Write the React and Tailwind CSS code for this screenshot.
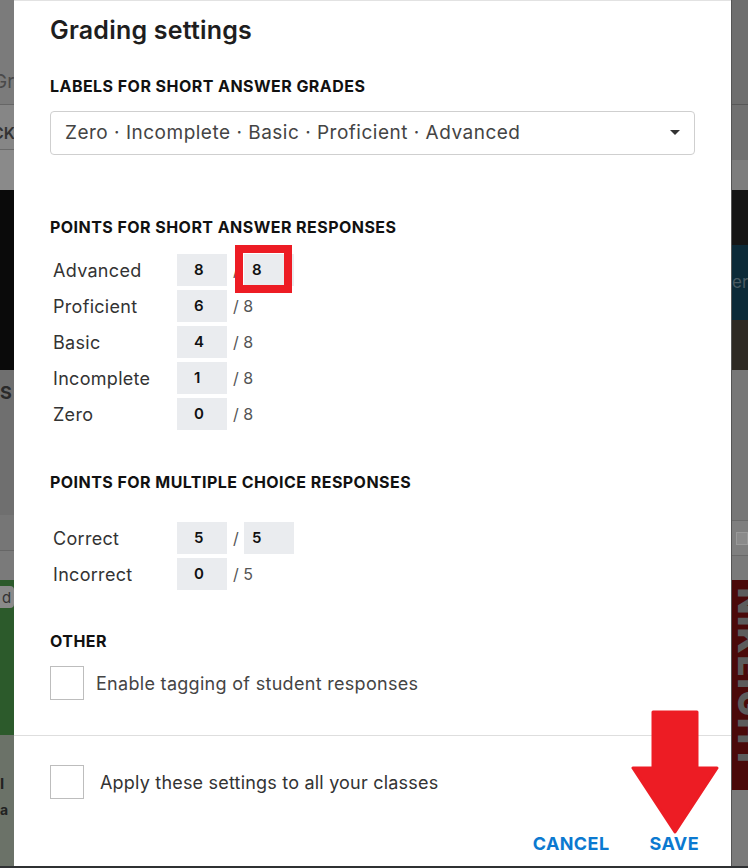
const shortRows = [
  { label: "Advanced", value: "8", editable: true },
  { label: "Proficient", value: "6" },
  { label: "Basic", value: "4" },
  { label: "Incomplete", value: "1" },
  { label: "Zero", value: "0" },
];

const mcRows = [
  { label: "Correct", value: "5", editable: true, max: "5" },
  { label: "Incorrect", value: "0", max: "5" },
];

function PointsRow({ label, value, editable, max = "8", highlight }) {
  return (
    <div className="flex items-center h-[32px]">
      <span className="w-[127px] pl-[3px] text-[18px] tracking-[0.3px] text-[#333]">{label}</span>
      <div className="w-[50px] h-[32px] bg-[#eaecef] flex items-center pl-[17px] text-[15px] font-semibold text-[#111]">
        {value}
      </div>
      {editable ? (
        <>
          <span className="w-[17px] pl-[6px] text-[16px] text-[#555]">/</span>
          <div className="relative w-[50px] h-[32px] bg-[#eaecef] flex items-center pl-[8px] text-[15px] font-semibold text-[#111]">
            {max}
            {highlight && (
              <div className="absolute left-[-9px] top-[-9px] w-[57px] h-[48px] border-[8px] border-[#ed1c24]" />
            )}
          </div>
        </>
      ) : (
        <span className="pl-[6px] text-[16px] text-[#555]">/ {max}</span>
      )}
    </div>
  );
}

function Checkbox() {
  return <div className="w-[34px] h-[34px] border border-[#bdbdbd] bg-white shrink-0" />;
}

function SectionTitle({ className = "", children }) {
  return (
    <h2 className={`text-[16px] leading-[20px] font-bold tracking-[0.45px] text-[#111] uppercase ${className}`}>
      {children}
    </h2>
  );
}

function LeftStrip() {
  return (
    <div className="w-[14px] flex flex-col text-[15px] leading-none overflow-hidden">
      <div className="h-[104px] bg-[#7b7b7b] flex items-end pb-[13px] text-[19px] text-[#4a4a4a]">
        <span className="ml-[-7px]">Gr</span>
      </div>
      <div className="h-[45px] bg-[#868686] border-t border-[#666] flex items-center pt-[12px] font-semibold text-[#333] text-[16px]">
        <span className="ml-[-8px]">CK</span>
      </div>
      <div className="h-[41px] bg-[#8a8a8a] border-t border-[#6a6a6a]" />
      <div className="h-[180px] bg-[#0a0a0a]" />
      <div className="h-[145px] bg-[#6f6f6f] pt-[14px] text-[18px] font-bold text-[#2a2a2a]">S</div>
      <div className="h-[35px] bg-[#767676]" />
      <div className="h-[30px] bg-[#7a7a7a] border-t border-[#666]" />
      <div className="h-[155px] bg-[#2c5a2b] pt-[6px]">
        <div className="h-[22px] bg-[#8a8a8a] rounded-r-[4px] text-[#333] pl-[2px] flex items-center">d</div>
      </div>
      <div className="flex-1 bg-[#6b7268] pt-[36px] font-bold text-[#222] leading-[26px]">
        <div>I</div>
        <div className="text-[14px]">a</div>
      </div>
    </div>
  );
}

function RightStrip() {
  return (
    <div className="flex-1 flex flex-col border-l border-[#555] overflow-hidden text-[15px] leading-none">
      <div className="h-[105px] bg-[#6e6e6e] border-b border-[#585858]" />
      <div className="h-[55px] bg-[#707070]" />
      <div className="h-[30px] bg-[#7d7d7d]" />
      <div className="h-[55px] bg-[#151515]" />
      <div className="h-[75px] bg-[#0c2a38] flex items-center text-[#4a5a62] text-[17px]">er</div>
      <div className="h-[50px] bg-[#2e2a24]" />
      <div className="h-[150px] bg-[#777]" />
      <div className="h-[35px] bg-[#7f7f7f] border-t border-[#6a6a6a] flex items-center pl-[4px]">
        <div className="w-[12px] h-[13px] border border-[#999] bg-[#8a8a8a]" />
      </div>
      <div className="h-[25px] bg-[#7a7a7a] border-t border-[#6a6a6a]" />
      <div className="h-[210px] bg-[#4a0909] pt-[8px] pl-[1px] overflow-hidden">
        <div className="[writing-mode:vertical-rl] text-[34px] font-black text-[#5c5c5c] leading-none tracking-[2px]">
          NIKEIGHT
        </div>
      </div>
      <div className="flex-1 bg-[#7a7a7a]" />
    </div>
  );
}

export default function App() {
  return (
    <div className="w-[748px] h-[868px] flex overflow-hidden border-b-2 border-[#2f3133] font-['Inter',sans-serif]">
      <LeftStrip />

      <div className="relative w-[717px] bg-white border-t border-[#e2e2e2] flex flex-col">
        <div className="px-[36px]">
          <h1 className="pt-[13px] text-[25px] leading-[32px] tracking-[0.2px] font-semibold text-[#1e1e1e]">
            Grading settings
          </h1>

          {/* labels */}
          <SectionTitle className="mt-[30px]">Labels for short answer grades</SectionTitle>
          <div className="mt-[15px] h-[44px] border border-[#cfcfcf] rounded-[4px] flex items-center justify-between pl-[14px] pr-[14px]">
            <span className="text-[19px] tracking-[0.5px] text-[#444]">
              Zero · Incomplete · Basic · Proficient · Advanced
            </span>
            <svg width="10" height="6" viewBox="0 0 10 6">
              <path d="M0 0h10L5 5z" fill="#333" />
            </svg>
          </div>

          {/* short answer */}
          <SectionTitle className="mt-[62px]">Points for short answer responses</SectionTitle>
          <div className="mt-[17px] flex flex-col gap-[4px]">
            {shortRows.map((r) => (
              <PointsRow key={r.label} {...r} highlight={r.editable} />
            ))}
          </div>

          {/* multiple choice */}
          <SectionTitle className="mt-[42px]">Points for multiple choice responses</SectionTitle>
          <div className="mt-[30px] flex flex-col gap-[4px]">
            {mcRows.map((r) => (
              <PointsRow key={r.label} {...r} />
            ))}
          </div>

          {/* other */}
          <SectionTitle className="mt-[41px]">Other</SectionTitle>
          <label className="mt-[15px] flex items-center gap-[12px]">
            <Checkbox />
            <span className="text-[18px] tracking-[0.3px] text-[#444]">Enable tagging of student responses</span>
          </label>
        </div>

        <div className="mt-[35px] border-t border-[#dedede] px-[36px] pt-[29px]">
          <label className="flex items-center gap-[16px]">
            <Checkbox />
            <span className="text-[18px] tracking-[0.2px] text-[#333]">Apply these settings to all your classes</span>
          </label>
          <div className="mt-[31px] flex justify-end gap-[40px] mr-[-4px] text-[18px] tracking-[0.4px] font-bold text-[#0b79d0]">
            <button>CANCEL</button>
            <button>SAVE</button>
          </div>
        </div>

        {/* annotation arrow */}
        <svg
          className="absolute left-[617px] top-[709px]"
          width="88"
          height="124"
          viewBox="0 0 88 124"
        >
          <path
            d="M22 2h44v56h20L44 122L2 58h20z"
            fill="#ed1c24"
            stroke="#ed1c24"
            strokeWidth="3"
            strokeLinejoin="round"
          />
        </svg>
      </div>

      <RightStrip />
    </div>
  );
}
